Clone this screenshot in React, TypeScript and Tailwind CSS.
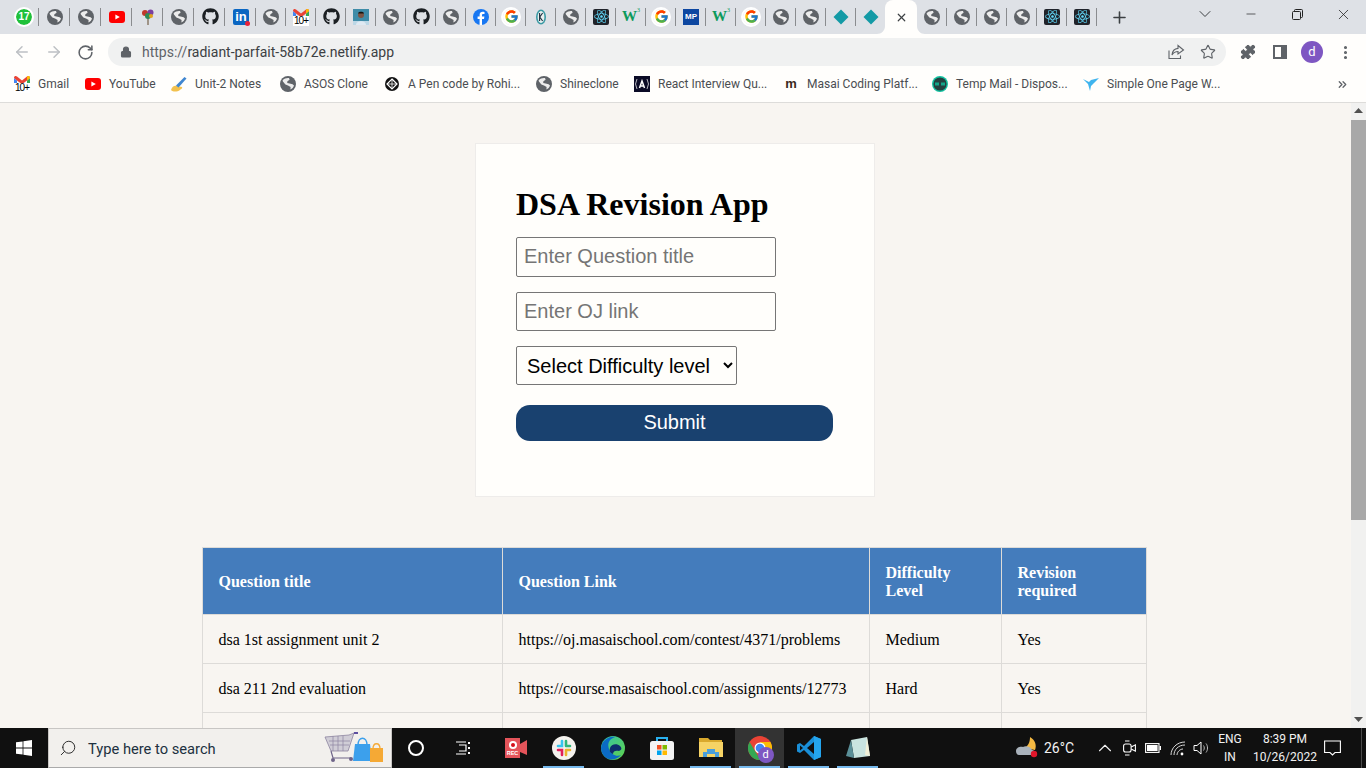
import React from "react";
import { FaGithub, FaReact } from "react-icons/fa";
import { FcGoogle } from "react-icons/fc";
import { ArrowLeft, ArrowRight, RotateCw, Lock, Star, EllipsisVertical, Plus, X, ChevronDown, ChevronUp, Minus, Search, ChevronsRight, Puzzle } from "lucide-react";

const UI = { fontFamily: "Roboto, 'Noto Sans', sans-serif" };
const ARIAL = { fontFamily: "'Liberation Sans', Arial, sans-serif" };
const SERIF = { fontFamily: "'Liberation Serif', 'Times New Roman', serif" };

function Globe({ s = 16 }: { s?: number }) {
  return (
    <svg width={s} height={s} viewBox="0 0 16 16">
      <circle cx="8" cy="8" r="8" fill="#5f6368" />
      <path d="M2.6 4.2C4.2 2.6 6.6 1.8 9 2.1L9.6 3.8 7.4 5.2 7.2 7 9.6 7.4 12.6 8.2 14 9.6C13.5 11.4 12.2 12.9 10.4 13.6L10.6 11 8 9.6 5.4 8.6 2.9 5.6Z" fill="#ececec" />
    </svg>
  );
}
function YouTube({ s = 16 }: { s?: number }) {
  return (
    <svg width={s} height={s} viewBox="0 0 16 16">
      <rect y="2" width="16" height="12" rx="3" fill="#f00" />
      <path d="M6.4 5.4 10.8 8 6.4 10.6Z" fill="#fff" />
    </svg>
  );
}
function Gmail() {
  return (
    <span className="relative block w-4 h-4">
      <svg width="16" height="11" viewBox="0 0 16 11" className="block">
        <path d="M0 2V11H3V4.5Z" fill="#4285f4" />
        <path d="M16 2V11H13V4.5Z" fill="#34a853" />
        <path d="M0 2C0 0 2 -.4 3 .6L8 4.5 13 .6C14 -.4 16 0 16 2L13 4.5 8 8.2 3 4.5Z" fill="#ea4335" />
        <path d="M13 .6C14 -.4 16 0 16 2L13 4.5Z" fill="#fbbc04" />
      </svg>
      <span className="absolute left-0 top-[7px] w-4 text-center text-[10px] leading-[10px] bg-white text-black tracking-[-1px]" style={ARIAL}>10+</span>
    </span>
  );
}
function ReactTile() {
  return (
    <span className="w-4 h-4 bg-[#20232a] rounded-[2px] flex items-center justify-center text-[#61dafb]">
      <FaReact size={15} />
    </span>
  );
}
function Diamond() {
  return (
    <svg width="16" height="16" viewBox="0 0 16 16">
      <path d="M8 .5 15.5 8 8 15.5 .5 8Z" fill="#139aa6" />
    </svg>
  );
}
function GoogleTab() {
  return (
    <span className="w-4 h-4 rounded-full bg-white flex items-center justify-center outline-2 outline-white">
      <FcGoogle size={15} />
    </span>
  );
}
function W3() {
  return (
    <span className="w-4 h-4 flex items-start justify-center text-[#0d9a5c] font-bold text-[15px] leading-[15px]" style={SERIF}>
      W<sup className="text-[6px] leading-[8px] font-normal">3</sup>
    </span>
  );
}

const tabIcons: React.ReactNode[] = [
  <span className="w-4 h-4 rounded-full bg-[#1fc13a] text-white text-[10px] leading-4 text-center font-bold outline-2 outline-white block" style={ARIAL}>17</span>,
  <Globe />,
  <Globe />,
  <YouTube />,
  <svg width="16" height="16" viewBox="0 0 16 16">
    <path d="M8 9V16" stroke="#8a7a68" strokeWidth="1.5" />
    <circle cx="5" cy="4" r="3" fill="#c0392b" />
    <circle cx="10.5" cy="3.5" r="3" fill="#7b3fa0" />
    <circle cx="8" cy="7" r="3" fill="#2e8b57" />
    <circle cx="11" cy="7" r="2" fill="#e1a21d" />
  </svg>,
  <Globe />,
  <FaGithub size={17} color="#1b1f23" />,
  <span className="relative w-4 h-4 bg-[#0a66c2] rounded-[2px] block text-white font-bold text-[13px] leading-[15px] text-center" style={ARIAL}>
    in
    <span className="absolute -right-[1px] -bottom-[1px] w-[5px] h-[5px] rounded-full bg-[#e7223a]" />
  </span>,
  <Globe />,
  <Gmail />,
  <FaGithub size={17} color="#1b1f23" />,
  <svg width="16" height="16" viewBox="0 0 16 16">
    <rect width="16" height="16" fill="#3f8ca8" />
    <rect y="12" width="16" height="4" fill="#bcd7e6" />
    <circle cx="8" cy="6" r="3" fill="#7d5443" />
    <path d="M3 16C3 11 13 11 13 16Z" fill="#dfe9f2" />
    <path d="M5 4.5C5 2 11 2 11 4.5Z" fill="#16130f" />
  </svg>,
  <Globe />,
  <FaGithub size={17} color="#1b1f23" />,
  <Globe />,
  <svg width="16" height="16" viewBox="0 0 16 16">
    <circle cx="8" cy="8" r="8" fill="#1877f2" />
    <path d="M9 16V10H11L11.4 7.6H9V6.2C9 5.4 9.4 5 10.2 5H11.5V3C10.8 2.9 10.2 2.8 9.7 2.8 7.8 2.8 6.6 4 6.6 5.9V7.6H4.6V10H6.6V16Z" fill="#fff" />
  </svg>,
  <GoogleTab />,
  <svg width="16" height="16" viewBox="0 0 16 16">
    <ellipse cx="8" cy="8" rx="5" ry="7.5" fill="#3b9aa4" />
    <ellipse cx="8" cy="8" rx="3.4" ry="6" fill="#e8f0f0" />
    <path d="M6.6 4V12M9.6 4 6.8 8 9.6 12" stroke="#1c2b3a" strokeWidth="1.1" fill="none" />
  </svg>,
  <Globe />,
  <ReactTile />,
  <W3 />,
  <GoogleTab />,
  <span className="w-4 h-4 bg-[#0d47a1] text-white text-[8px] leading-4 font-bold text-center block" style={ARIAL}>MP</span>,
  <W3 />,
  <GoogleTab />,
  <Globe />,
  <Globe />,
  <Diamond />,
  <Diamond />,
];
const tabsAfter: React.ReactNode[] = [<Globe />, <Globe />, <Globe />, <Globe />, <ReactTile />, <ReactTile />];

function Tab({ children, w }: { children: React.ReactNode; w: number }) {
  return (
    <div className="h-[34px] flex items-center shrink-0" style={{ width: w }}>
      <span className={`flex-1 flex items-center justify-center pb-[1px] ${w === 31 ? "pl-[2px]" : "pl-[1px]"}`}>{children}</span>
      <span className="w-[1px] h-[18px] bg-[#8a8c8f] mb-[1px]" />
    </div>
  );
}

function TabStrip() {
  return (
    <div className="h-[34px] bg-[#dee1e6] flex pl-[8px] items-start shrink-0">
      {tabIcons.map((ic, i) => {
        const w = i < 8 ? 31 : 30;
        return i === tabIcons.length - 1 ? (
          <div key={i} className="h-[34px] w-[29px] flex items-center justify-center shrink-0 pb-[1px] pl-[1px]">{ic}</div>
        ) : (
          <Tab key={i} w={w}>{ic}</Tab>
        );
      })}
      <div className="relative w-[32px] h-[34px] bg-[#fffefc] rounded-t-[8px] flex items-center justify-center shrink-0 text-[#3c4043]">
        <X size={13} strokeWidth={2.2} />
        <svg width="8" height="8" viewBox="0 0 8 8" className="absolute -left-[8px] bottom-0">
          <path d="M8 0V8H0C4.5 8 8 4.5 8 0Z" fill="#fffefc" />
        </svg>
        <svg width="8" height="8" viewBox="0 0 8 8" className="absolute -right-[8px] bottom-0">
          <path d="M0 0V8H8C3.5 8 0 4.5 0 0Z" fill="#fffefc" />
        </svg>
      </div>
      {tabsAfter.map((ic, i) => (
        <Tab key={i} w={30}>{ic}</Tab>
      ))}
      <div className="w-[44px] h-[34px] flex items-center justify-center text-[#3c4043] shrink-0">
        <Plus size={19} strokeWidth={2} />
      </div>
      <div className="w-[40px] h-[28px] ml-[44px] flex items-center justify-center text-[#3c4043]">
        <ChevronDown size={20} strokeWidth={1.2} />
      </div>
      <div className="w-[46px] h-[28px] ml-[3px] flex items-center justify-center text-[#222]">
        <Minus size={14} strokeWidth={1.2} />
      </div>
      <div className="w-[46px] h-[28px] flex items-center justify-center">
        <svg width="11" height="11" viewBox="0 0 11 11" fill="none" stroke="#222">
          <rect x=".5" y="2.5" width="8" height="8" rx="1" />
          <path d="M2.5 2.5V1.5A1 1 0 0 1 3.5 .5H9.5A1 1 0 0 1 10.5 1.5V7.5A1 1 0 0 1 9.5 8.5H8.5" />
        </svg>
      </div>
      <div className="w-[46px] h-[28px] flex items-center justify-center text-[#222]">
        <X size={17} strokeWidth={1.1} />
      </div>
    </div>
  );
}

function Toolbar() {
  return (
    <div className="h-[34px] pt-[2px] bg-[#fffefc] flex items-center shrink-0 text-[#5f6368]" style={UI}>
      <div className="w-[108px] flex items-center pl-[13px] gap-[14px] shrink-0">
        <ArrowLeft size={18} color="#bdc0c4" strokeWidth={2} />
        <ArrowRight size={18} color="#bdc0c4" strokeWidth={2} />
        <RotateCw size={17} strokeWidth={2.2} />
      </div>
      <div className="w-[1118px] h-[28px] bg-[#f0f1f1] rounded-full flex items-center pl-[12px] pr-[10px] shrink-0">
        <Lock size={12} fill="#5f6368" strokeWidth={2.2} />
        <span className="ml-[10px] text-[14px] text-[#3c4043]"><span className="text-[#5f6368]">https://</span>radiant-parfait-58b72e.netlify.app</span>
        <span className="ml-auto flex items-center gap-[15px]">
          <svg width="17" height="16" viewBox="0 0 17 16" fill="none" stroke="#5f6368" strokeWidth="1.1">
            <path d="M10 1.5 15.5 6 10 10V7.5C7.5 7.5 5.5 8.6 4 11 4.3 7.5 6.4 4.8 10 4.4Z" />
            <path d="M1 6.5V14.5H12.5V11.5" />
          </svg>
          <Star size={16} strokeWidth={1.7} />
        </span>
      </div>
      <div className="flex items-center pl-[14px]">
        <Puzzle size={16} fill="#5f6368" strokeWidth={1.5} />
        <svg width="14" height="14" viewBox="0 0 14 14" className="ml-[17px]">
          <rect x="1" y="1" width="12" height="12" fill="none" stroke="#5f6368" strokeWidth="2" />
          <rect x="8" y="1" width="5" height="12" fill="#5f6368" />
        </svg>
        <span className="ml-[14px] w-[22px] h-[22px] rounded-full bg-[#7e57c2] text-white text-[13px] leading-[21px] text-center">d</span>
        <EllipsisVertical size={17} strokeWidth={2.4} className="ml-[14px]" />
      </div>
    </div>
  );
}

const bookmarks: { w: number; icon: React.ReactNode; label: string }[] = [
  { w: 71, icon: <Gmail />, label: "Gmail" },
  { w: 86, icon: <YouTube />, label: "YouTube" },
  {
    w: 109,
    icon: (
      <svg width="16" height="16" viewBox="0 0 16 16">
        <path d="M0 14C1 10 4 9 6 10L11 11C12 13 9 13 9 14 6 16 2 16 0 14Z" fill="#f2c14e" />
        <path d="M5 9.5 13.5 1 15.5 2.5 7.5 11.5Z" fill="#3f86d0" />
      </svg>
    ),
    label: "Unit-2 Notes",
  },
  { w: 104, icon: <Globe />, label: "ASOS Clone" },
  {
    w: 152,
    icon: (
      <svg width="16" height="16" viewBox="0 0 16 16">
        <circle cx="8" cy="8" r="7" fill="#111" />
        <path d="M8 3 13 8 8 13 3 8Z" fill="none" stroke="#fff" strokeWidth="1.2" />
        <path d="M3 8H13M8 3V13" stroke="#fff" strokeWidth=".8" />
      </svg>
    ),
    label: "A Pen code by Rohi...",
  },
  { w: 98, icon: <Globe />, label: "Shineclone" },
  {
    w: 149,
    icon: (
      <svg width="16" height="16" viewBox="0 0 16 16">
        <rect width="16" height="16" fill="#0b0b26" />
        <path d="M5.5 12 8 5 10.5 12M6.4 10H9.6" stroke="#fff" strokeWidth="1.5" fill="none" />
        <path d="M3 3 1.5 8 3 13M13 3 14.5 8 13 13" stroke="#fff" strokeWidth=".7" fill="none" />
      </svg>
    ),
    label: "React Interview Qu...",
  },
  {
    w: 149,
    icon: <span className="w-4 h-4 text-[13px] leading-[15px] font-bold text-[#3a2a20] text-center block" style={ARIAL}>m</span>,
    label: "Masai Coding Platf...",
  },
  {
    w: 151,
    icon: (
      <svg width="16" height="16" viewBox="0 0 16 16">
        <circle cx="8" cy="8" r="8" fill="#13c2a1" />
        <circle cx="8" cy="8" r="6.6" fill="#24403f" />
        <rect x="3" y="6.5" width="4" height="3" fill="#13a58a" />
        <rect x="9" y="6.5" width="4" height="3" fill="#13a58a" />
      </svg>
    ),
    label: "Temp Mail - Dispos...",
  },
  {
    w: 150,
    icon: (
      <svg width="16" height="16" viewBox="0 0 16 16">
        <path d="M0 3 6 6 8 4 16 2 11 7 8 10 7 15 5 8Z" fill="#3fb4ee" />
      </svg>
    ),
    label: "Simple One Page W...",
  },
];

function Bookmarks() {
  return (
    <div className="h-[35px] pb-[2px] bg-[#fffefc] flex items-center pl-[14px] shrink-0 border-b border-[#dddcda] text-[12px] text-[#4a4d51]" style={UI}>
      {bookmarks.map((b) => (
        <div key={b.label} className="flex items-center gap-[8px] shrink-0 whitespace-nowrap" style={{ width: b.w }}>
          <span className="w-4 h-4 flex items-center justify-center shrink-0">{b.icon}</span>
          <span>{b.label}</span>
        </div>
      ))}
      <ChevronsRight size={13} strokeWidth={2.4} className="ml-auto mr-[17px] text-[#5f6368]" />
    </div>
  );
}

const rows = [
  ["dsa 1st assignment unit 2", "https://oj.masaischool.com/contest/4371/problems", "Medium", "Yes"],
  ["dsa 211 2nd evaluation", "https://course.masaischool.com/assignments/12773", "Hard", "Yes"],
  ["", "", "", ""],
];

function Page() {
  return (
    <div className="flex-1 flex min-h-0">
      <main className="flex-1 min-w-0 overflow-hidden bg-[#f8f5f1] flex flex-col items-center pt-[40px] pr-[1px]">
        <section className="w-[400px] h-[354px] shrink-0 bg-[#fffefb] border border-[#eeecea] pl-[40px] pt-[42px]">
          <h1 className="text-[32px] leading-[37px] font-bold text-black" style={SERIF}>DSA Revision App</h1>
          <form className="flex flex-col items-start" style={ARIAL}>
            <input placeholder="Enter Question title" className="mt-[14px] w-[260px] h-[40px] border border-[#767676] rounded-[2px] pl-[7px] pr-[8px] pb-[2px] text-[20px] bg-transparent placeholder:text-[#757575]" />
            <input placeholder="Enter OJ link" className="mt-[15px] w-[260px] h-[39px] border border-[#767676] rounded-[2px] pl-[7px] pr-[8px] text-[20px] bg-transparent placeholder:text-[#757575]" />
            <select defaultValue="" className="mt-[15px] w-[221px] h-[39px] border border-[#767676] rounded-[2px] pl-[6px] text-[20px] bg-[#fffefb] text-black">
              <option value="">Select Difficulty level</option>
              <option value="Easy">Easy</option>
              <option value="Medium">Medium</option>
              <option value="Hard">Hard</option>
            </select>
            <button type="button" className="mt-[20px] w-[317px] h-[36px] pb-[2px] bg-[#19416f] text-white text-[20px] rounded-[14px]">Submit</button>
          </form>
        </section>
        <table className="mt-[50px] mr-[2px] w-[944px] shrink-0 table-fixed border-collapse text-[16px] text-black" style={SERIF}>
          <colgroup>
            <col className="w-[300px]" />
            <col className="w-[367px]" />
            <col className="w-[132px]" />
            <col className="w-[145px]" />
          </colgroup>
          <thead>
            <tr className="bg-[#447cbc] text-white h-[67px]">
              {["Question title", "Question Link", "Difficulty Level", "Revision required"].map((h) => (
                <th key={h} className="border border-[#dddbd8] px-[16px] pt-[1px] text-left font-bold leading-[18px]">{h}</th>
              ))}
            </tr>
          </thead>
          <tbody>
            {rows.map((r, i) => (
              <tr key={i} className="h-[49px]">
                {r.map((c, j) => (
                  <td key={j} className="border border-[#dddbd8] px-[16px] pt-[1px]">{c}</td>
                ))}
              </tr>
            ))}
          </tbody>
        </table>
      </main>
      <aside className="w-[15px] shrink-0 bg-[#f1f1f0] flex flex-col items-center relative">
        <svg width="9" height="5" viewBox="0 0 9 5" className="mt-[5px]"><path d="M4.5 0 9 5H0Z" fill="#505050" /></svg>
        <div className="w-[15px] h-[400px] bg-[#a8a8a8] mt-[7px]" />
        <svg width="9" height="5" viewBox="0 0 9 5" className="mt-auto mb-[6px]"><path d="M0 0H9L4.5 5Z" fill="#505050" /></svg>
      </aside>
    </div>
  );
}

function Box({ w, children, className = "" }: { w: number; children?: React.ReactNode; className?: string }) {
  return <div className={`h-full flex items-center justify-center shrink-0 ${className}`} style={{ width: w }}>{children}</div>;
}
function Under({ w, children, active = false }: { w: number; children: React.ReactNode; active?: boolean }) {
  return (
    <div className={`relative h-full flex items-center justify-center shrink-0 ${active ? "bg-[#333333]" : ""}`} style={{ width: w }}>
      {children}
      <span className="absolute left-[4px] right-[4px] bottom-0 h-[2px] bg-[#76b9ed]" />
    </div>
  );
}

function Taskbar() {
  return (
    <footer className="h-[40px] bg-[#101010] flex items-stretch shrink-0 text-white" style={UI}>
      <Box w={48}>
        <svg width="16" height="16" viewBox="0 0 16 16" fill="#fff">
          <path d="M0 2.3 6.6 1.4V7.6H0ZM7.4 1.3 16 0V7.6H7.4ZM0 8.4H6.6V14.6L0 13.7ZM7.4 8.4H16V16L7.4 14.7Z" />
        </svg>
      </Box>
      <div className="w-[344px] shrink-0 bg-[#f2f0ed] border border-[#c8c6c4] border-b-[#aaa] flex items-center pl-[10px] text-[#2b2b2b]">
        <Search size={18} strokeWidth={1.3} className="-scale-x-100 shrink-0" />
        <span className="ml-[11px] pt-[3px] text-[14.7px] text-[#20303f]">Type here to search</span>
        <svg width="62" height="34" viewBox="0 0 62 34" className="ml-auto mr-[5px]">
          <path d="M1 6 25 4 30 2 24 20 7 20Z" fill="#d0cdd6" stroke="#8d84a0" strokeWidth=".8" />
          <path d="M5 10H26M6 14H25M9 5V20M14 5V20M19 5V20" stroke="#8d84a0" strokeWidth=".7" />
          <path d="M7 20 9 27H27" stroke="#6e6488" strokeWidth="1.2" fill="none" />
          <path d="M30 2H34" stroke="#5e4fa0" strokeWidth="2" />
          <circle cx="9" cy="29" r="2" fill="#6e6488" />
          <circle cx="27" cy="28" r="2" fill="#6e6488" />
          <path d="M31 13H46L48 30H29Z" fill="#3ca0ec" />
          <path d="M34 14C34 5 43 5 43 14" fill="none" stroke="#3ca0ec" strokeWidth="1.5" />
          <path d="M46 17H59V31H46Z" fill="#f5a935" />
          <path d="M49 18C49 11 56 11 56 18" fill="none" stroke="#f5a935" strokeWidth="1.3" />
        </svg>
      </div>
      <Box w={48}><span className="w-[16px] h-[16px] rounded-full border-[2.5px] border-white" /></Box>
      <Box w={48}>
        <svg width="16" height="14" viewBox="0 0 16 14" fill="none" stroke="#fff" strokeWidth="1.2">
          <path d="M0 1H10M0 13H10M3 4H10V10H3" />
          <path d="M13 1V3M13 6V8M13 11V13" strokeWidth="2" />
        </svg>
      </Box>
      <Box w={2} />
      <Box w={49}>
        <svg width="24" height="20" viewBox="0 0 24 20">
          <path d="M2 0H17V6L24 2V17L17 14V20H2Z" fill="#e4545a" />
          <circle cx="10" cy="7" r="4" fill="#fff" />
          <circle cx="10" cy="7" r="2" fill="#d5101b" />
          <text x="9.5" y="17" fontSize="5.5" fill="#fff" textAnchor="middle" fontWeight="700" fontFamily="Liberation Sans">REC</text>
        </svg>
      </Box>
      <Under w={49}>
        <svg width="24" height="24" viewBox="0 0 24 24">
          <circle cx="12" cy="12" r="12" fill="#f4f2ee" />
          <path d="M10 5V10H6" stroke="#36c5f0" strokeWidth="2.6" strokeLinecap="round" fill="none" />
          <path d="M14 5V10M18 10H14" stroke="#2eb67d" strokeWidth="2.6" strokeLinecap="round" fill="none" />
          <path d="M14 19V14M18 14H14" stroke="#ecb22e" strokeWidth="2.6" strokeLinecap="round" fill="none" />
          <path d="M10 19V14H6" stroke="#e01e5a" strokeWidth="2.6" strokeLinecap="round" fill="none" />
        </svg>
      </Under>
      <Box w={49}>
        <svg width="24" height="24" viewBox="0 0 24 24">
          <defs>
            <linearGradient id="edgeA" x1="0" y1="0" x2="1" y2="1"><stop offset="0" stopColor="#35c1a8" /><stop offset="1" stopColor="#5fd34a" /></linearGradient>
          </defs>
          <circle cx="12" cy="12" r="12" fill="url(#edgeA)" />
          <path d="M0 12C1 4 8 0 14 1 8 3 6 8 8 13 10 19 16 21 20 19 16 24 8 25 4 21 1 18 0 15 0 12Z" fill="#0b6bc4" />
          <path d="M9 12C10 8 16 7 19 10 21 12 21 14 18 15 15 14 12 15 12 18 9 17 8 15 9 12Z" fill="#0d2d6c" />
        </svg>
      </Box>
      <Box w={49}>
        <svg width="24" height="24" viewBox="0 0 24 24">
          <path d="M7 5V2H17V5" fill="none" stroke="#29b0ee" strokeWidth="2" />
          <rect y="5" width="24" height="19" rx="2.5" fill="#f3f3f3" />
          <rect x="7" y="9" width="4.5" height="4.5" fill="#f25022" />
          <rect x="12.5" y="9" width="4.5" height="4.5" fill="#7fba00" />
          <rect x="7" y="14.5" width="4.5" height="4.5" fill="#00a4ef" />
          <rect x="12.5" y="14.5" width="4.5" height="4.5" fill="#ffb900" />
        </svg>
      </Box>
      <Under w={49}>
        <svg width="24" height="20" viewBox="0 0 24 20">
          <path d="M0 0H9L11 2H23V6H0Z" fill="#d9a92d" />
          <path d="M0 4H24V19H0Z" fill="#f6d365" />
          <path d="M4 19V14H8V11H16V14H20V19H16V16H8V19Z" fill="#4a9fdb" />
        </svg>
      </Under>
      <Under w={49} active>
        <span className="relative block w-[24px] h-[24px]">
          <svg width="24" height="24" viewBox="0 0 24 24">
            <circle cx="12" cy="12" r="12" fill="#ea4335" />
            <path d="M12 24A12 12 0 0 1 1.6 6L7 15 12.5 24Z" fill="#34a853" />
            <path d="M12 6H22.4A12 12 0 0 1 12 24L17 15Z" fill="#fbbc04" />
            <circle cx="12" cy="12" r="5.5" fill="#fff" />
            <circle cx="12" cy="12" r="4.3" fill="#4285f4" />
          </svg>
          <span className="absolute -right-[2px] -bottom-[3px] w-[16px] h-[16px] rounded-full bg-[#7e57c2] text-white text-[11px] leading-[15px] text-center">d</span>
        </span>
      </Under>
      <Under w={49}>
        <svg width="24" height="24" viewBox="0 0 24 24">
          <path d="M17 0 24 3V21L17 24 7 14 3 17 0 15.5V8.5L3 7 7 10Z" fill="#1a8fd8" />
          <path d="M17 6V18L10 12Z" fill="#101010" />
          <path d="M3 9.5V14.5L6 12Z" fill="#101010" />
          <path d="M17 0 24 3V21L17 24Z" fill="#24a5ee" />
        </svg>
      </Under>
      <Under w={49}>
        <svg width="24" height="24" viewBox="0 0 24 24">
          <path d="M5 4 21 1 24 20 8 22Z" fill="#c9e4e0" />
          <path d="M5 4 0 20 8 22Z" fill="#5a8f98" />
          <path d="M21 1 24 20 19 19Z" fill="#f2f0d8" />
        </svg>
      </Under>
      <div className="ml-auto w-[356px] flex h-full shrink-0 text-[#f2f2f2]">
        <Box w={30} className="pl-[3px]">
          <svg width="24" height="22" viewBox="0 0 24 22">
            <path d="M15 0C20 3 22 8 20 13L10 11C14 8 15 4 15 0Z" fill="#f5b942" />
            <path d="M1 14C1 10 6 9 8 10 11 8 16 10 17 13 20 13 21 17 18 18H4C2 18 1 16 1 14Z" fill="#a9b2bb" />
            <circle cx="19" cy="17" r="3.2" fill="#e0162b" />
          </svg>
        </Box>
        <Box w={45} className="text-[14px] justify-start"><span className="ml-[4px]">26°C</span></Box>
        <Box w={8} />
        <Box w={24}><ChevronUp size={22} strokeWidth={1.2} /></Box>
        <Box w={24}>
          <svg width="13" height="16" viewBox="0 0 13 16" fill="none" stroke="#fff" strokeWidth="1.1">
            <rect x=".6" y="4" width="7.5" height="8" rx="2" />
            <path d="M8.2 7 12.4 4.8V11.2L8.2 9" />
            <path d="M2 1H6.5M2 15H6.5" />
          </svg>
        </Box>
        <Box w={24}>
          <svg width="16" height="10" viewBox="0 0 16 10">
            <rect x=".6" y=".6" width="13.4" height="8.8" fill="none" stroke="#fff" strokeWidth="1.1" />
            <rect x="2" y="2" width="10.6" height="6" fill="#fff" />
            <rect x="14.6" y="3" width="1.4" height="4" fill="#fff" />
          </svg>
        </Box>
        <Box w={25}>
          <svg width="16" height="15" viewBox="0 0 16 15" fill="none" stroke="#d8d8d8" strokeWidth="1">
            <path d="M1 14C1 7 7 1 15 1M4 14C4 9 8 4 15 4M7 14C7 11 10 8 13 8" />
            <circle cx="12" cy="13" r="1.4" fill="#fff" stroke="none" />
          </svg>
        </Box>
        <Box w={22}>
          <svg width="17" height="16" viewBox="0 0 17 16" fill="none" stroke="#fff" strokeWidth="1">
            <path d="M1 5.5H4L8 2V14L4 10.5H1Z" />
            <path d="M10.5 5.5C11.5 7 11.5 9 10.5 10.5M13 3.5C15 6 15 10 13 12.5" stroke="#bbb" />
          </svg>
        </Box>
        <Box w={36} className="flex-col text-[12px] leading-[18px]">
          <span>ENG</span>
          <span>IN</span>
        </Box>
        <Box w={74} className="flex-col text-[12px] leading-[18px]">
          <span>8:39 PM</span>
          <span>10/26/2022</span>
        </Box>
        <Box w={20}>
          <svg width="17" height="16" viewBox="0 0 17 16" fill="none" stroke="#fff" strokeWidth="1.1">
            <path d="M.6 1H16.4V12.5H11L8.5 15 6 12.5H.6Z" />
          </svg>
        </Box>
        <Box w={19} />
        <span className="w-[1px] h-full bg-[#4a4a4a]" />
      </div>
    </footer>
  );
}

export default function App() {
  return (
    <div className="w-[1366px] h-[768px] flex flex-col overflow-hidden bg-white">
      <TabStrip />
      <Toolbar />
      <Bookmarks />
      <Page />
      <Taskbar />
    </div>
  );
}
